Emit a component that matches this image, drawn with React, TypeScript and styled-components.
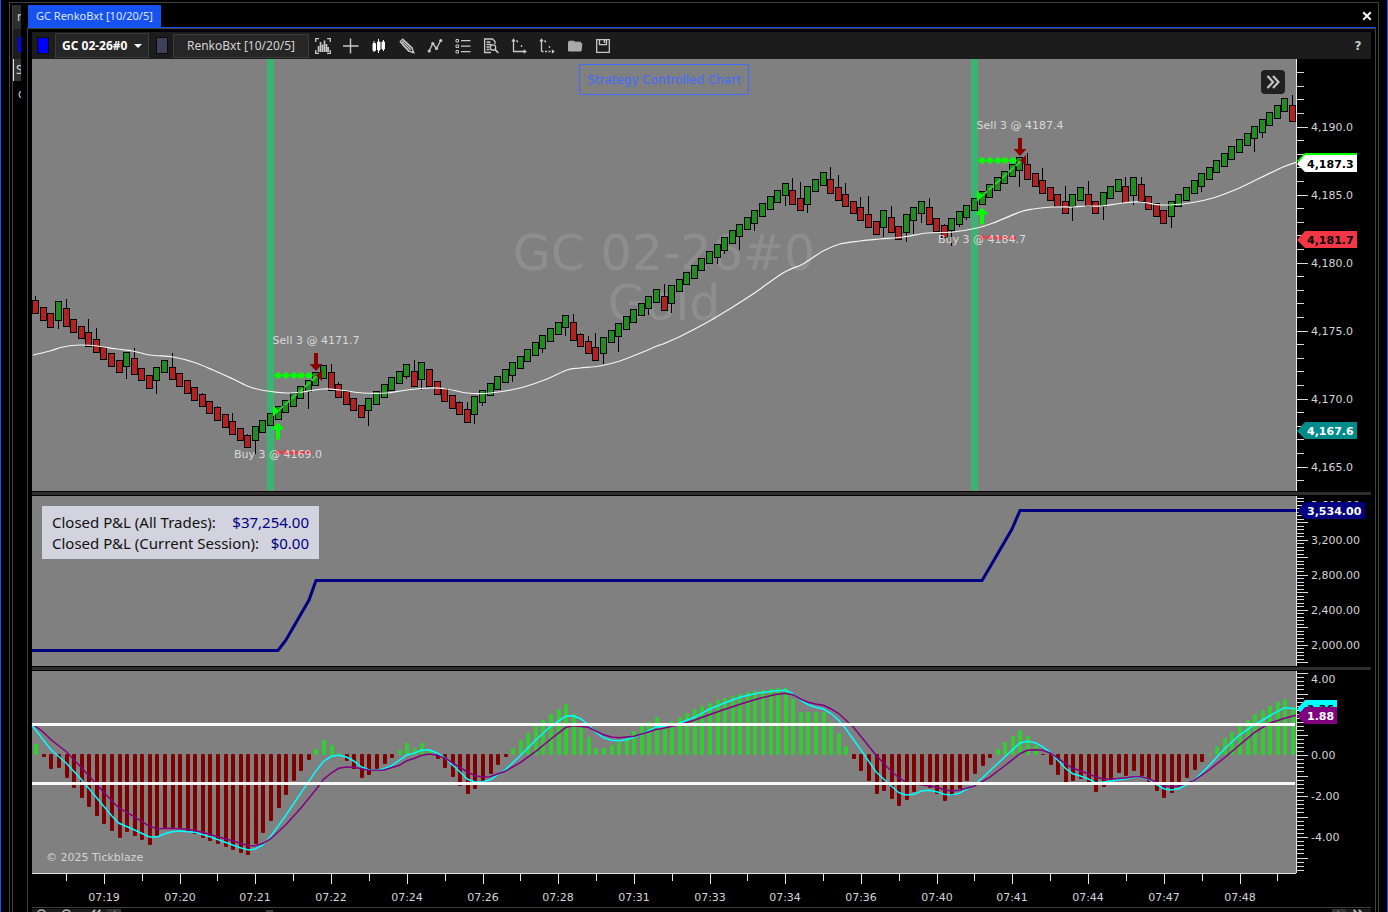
import React from 'react';
import styled, { createGlobalStyle } from 'styled-components';

const UI_FONT = '"Noto Sans", "Open Sans", sans-serif';
const CHART_FONT = '"DejaVu Sans", sans-serif';

const GlobalStyle = createGlobalStyle`
  * { box-sizing: border-box; }
  body { margin: 0; background: #000; color: #d4d4d4; font-family: ${UI_FONT}; }
  button, select { font: inherit; color: inherit; }
`;

/* ---------- window chrome ---------- */

const Desktop = styled.div`
  height: 100vh;
  overflow: hidden;
  padding: 2px 8px 0;
  border: solid #1552f0;
  border-width: 0 1px;
  background: #000;
`;

const OuterFrame = styled.div`
  display: flex;
  min-height: 100%;
  padding-right: 2px;
  border: 1px solid #404040;
  border-bottom: 0;
`;

const BackStrip = styled.aside`
  width: 9px;
  margin: 2px 6px 0 2px;
  border-left: 1px solid #404040;
  overflow: hidden;
  flex: none;
  font-size: 12px;
  line-height: 22px;
  color: #d4d4d4;
`;

const BackRow = styled.div<{ $bg: string; $h: number; $caret?: boolean }>`
  display: flex;
  align-items: center;
  justify-content: flex-end;
  height: ${(p) => p.$h}px;
  border-left: ${(p) => (p.$caret ? '1px solid #e0e0e0' : '0')};
  background: ${(p) => p.$bg};
  overflow: hidden;
`;

const BackClip = styled.span<{ $w: number }>`
  width: ${(p) => p.$w}px;
  overflow: hidden;
`;

const BackSwatch = styled.span`
  width: 3px;
  height: 15px;
  background: #0000ff;
`;

const Window = styled.main`
  flex: 1;
  min-width: 0;
  padding-top: 2px;
`;

const TabRow = styled.header`
  display: flex;
  justify-content: space-between;
  align-items: center;
  height: 23px;
  margin-left: 1px;
  border-bottom: 1px solid #1552f0;
`;

const Tab = styled.button`
  height: 22px;
  padding: 0 8px;
  border: 0;
  background: #1552f0;
  color: #dfe5f5;
  font-size: 11px;
  line-height: 22px;
  white-space: nowrap;
`;

const IconButton = styled.button`
  display: flex;
  align-items: center;
  justify-content: center;
  width: 28px;
  height: 24px;
  padding: 0;
  border: 0;
  background: transparent;
  color: #c8c8c8;
  flex: none;
`;

const CloseButton = styled(IconButton)`
  width: 18px;
  color: #fff;
`;

const InnerFrame = styled.div`
  padding: 3px 4px 0;
  border: 1px solid #404040;
  border-bottom: 0;
`;

const Toolbar = styled.nav`
  display: flex;
  align-items: center;
  height: 27px;
  padding-left: 5px;
  background: #1c1c1c;
`;

const Swatch = styled.button<{ $color: string }>`
  width: 12px;
  height: 17px;
  padding: 0;
  border: 1px solid #0a0a0a;
  background: ${(p) => p.$color};
  flex: none;
`;

const SelectBox = styled.label`
  display: flex;
  align-items: center;
  position: relative;
  width: 94px;
  height: 25px;
  margin: 0 7px 0 6px;
  border: 1px solid #3c3c3c;
  background: #262626;
  svg { position: absolute; right: 6px; pointer-events: none; }
`;

const InstrumentSelect = styled.select`
  width: 100%;
  height: 23px;
  padding: 0 16px 0 6px;
  appearance: none;
  border: 0;
  background: transparent;
  color: #fff;
  font-size: 12px;
  font-weight: 700;
`;

const PeriodButton = styled.button`
  width: 136px;
  height: 24px;
  margin: 0 0 0 5px;
  padding: 0;
  border: 1px solid #3c3c3c;
  background: #262626;
  font-size: 12px;
  white-space: nowrap;
`;

const HelpButton = styled(IconButton)`
  width: 26px;
  margin-left: auto;
  font: 700 12px ${CHART_FONT};
`;

/* ---------- chart panes ---------- */

const Pane = styled.section<{ $h: number }>`
  display: grid;
  grid-template-columns: minmax(0, 1fr) 75px;
  height: ${(p) => p.$h}px;
`;

const Plot = styled.div`
  position: relative;
  background: #808080;
`;

const PlotSvg = styled.svg`
  display: block;
  width: 100%;
  height: 100%;
  font: 11px ${CHART_FONT};
`;

const AxisSvg = styled.svg`
  display: block;
  font: 11px ${CHART_FONT};
  fill: #d4d4d4;
`;

const Divider = styled.hr`
  height: 5px;
  margin: 0;
  border: solid #000;
  border-width: 1px 0;
  background: #2e2e2e;
`;

const StrategyBadge = styled.button`
  position: absolute;
  top: 5px;
  left: 50%;
  width: 170px;
  height: 31px;
  margin-left: -85px;
  padding: 0;
  border: 1px solid #3f6cff;
  border-radius: 2px;
  background: transparent;
  color: #3f6cff;
  font: 12px ${CHART_FONT};
  white-space: nowrap;
`;

const CollapseButton = styled.button`
  display: flex;
  align-items: center;
  justify-content: center;
  position: absolute;
  top: 11px;
  right: 11px;
  width: 24px;
  height: 24px;
  padding: 0;
  border: 0;
  border-radius: 4px;
  background: #202020;
  color: #c4c4c4;
`;

const PnlBox = styled.dl`
  position: absolute;
  top: 10px;
  left: 10px;
  width: 277px;
  margin: 0;
  padding: 6px 10px 5px;
  background: #d2d3de;
  color: #111;
  font-size: 15px;
  line-height: 21px;
`;

const PnlRow = styled.div`
  display: flex;
  justify-content: space-between;
  white-space: nowrap;
  dt, dd { margin: 0; }
  dd { color: #000080; }
`;

const Copyright = styled.small`
  position: absolute;
  left: 14px;
  bottom: 8px;
  color: #d4d4d4;
  font: 11px/14px ${CHART_FONT};
`;

const TimeAxis = styled.div`
  display: grid;
  grid-template-columns: minmax(0, 1fr) 75px;
  height: 34px;
`;

const BottomBar = styled.footer`
  display: flex;
  height: 24px;
  padding-top: 1px;
  border-top: 1px solid #3c3c3c;
`;

const BottomTools = styled.div`
  display: flex;
  background: #1c1c1c;
`;

const BottomButton = styled.button<{ $w: number; $light?: boolean }>`
  display: flex;
  align-items: flex-start;
  justify-content: center;
  width: ${(p) => p.$w}px;
  height: 22px;
  padding: 0;
  border: 0;
  background: ${(p) => (p.$light ? '#333' : 'transparent')};
  color: #b4b4b4;
`;

const ScrollTrack = styled.div`
  flex: 1;
  padding: 1px 0 0 145px;
`;

const ScrollThumb = styled.div`
  width: 7px;
  height: 16px;
  background: #3c3c3c;
`;

/* ---------- data ---------- */

const BAR_STEP = 7.57;
const barX = (i: number) => Math.round(3.3 + i * BAR_STEP);

/* [direction, body top, body bottom, wick top?, wick bottom?] */
type Candle = [number, number, number, number?, number?];
const D = -1;
const U = 1;
const candles: Candle[] = [
  [D, 300, 314, 296], [D, 307, 321], [D, 313, 328], [U, 301, 321, 0, 329], [D, 308, 327, 299],
  [D, 319, 333], [D, 326, 339], [D, 332, 347, 319], [D, 339, 353, 328], [D, 347, 360],
  [D, 353, 367], [D, 360, 373], [U, 352, 367, 0, 379], [D, 358, 375, 348], [D, 368, 381],
  [D, 375, 389], [U, 367, 381, 0, 394], [U, 360, 373], [D, 367, 380, 353], [D, 373, 387],
  [D, 380, 394], [D, 387, 401], [D, 394, 407, 393], [D, 401, 414], [D, 407, 421, 406],
  [D, 414, 428], [D, 421, 435, 413], [D, 428, 441], [D, 435, 448, 434], [U, 426, 441, 0, 454],
  [U, 420, 433], [U, 413, 426], [U, 406, 420], [U, 400, 413], [U, 393, 407],
  [U, 386, 399], [U, 380, 392, 0, 409], [U, 372, 386], [U, 365, 379], [D, 372, 391, 364],
  [D, 384, 398, 382], [D, 391, 405], [D, 398, 411], [D, 405, 418], [U, 398, 411, 0, 426],
  [U, 391, 405], [U, 384, 398], [U, 377, 391], [U, 371, 384], [U, 364, 377, 0, 379],
  [D, 371, 387, 360], [U, 362, 380, 0, 390], [D, 369, 387], [D, 381, 395], [D, 388, 402],
  [D, 395, 409], [D, 402, 415, 401], [D, 409, 423, 402], [U, 396, 415, 0, 424], [U, 390, 403, 0, 406],
  [U, 383, 396], [U, 376, 390], [U, 369, 383], [U, 362, 376, 0, 382], [U, 356, 369],
  [U, 349, 362], [U, 342, 356], [U, 335, 349, 0, 353], [U, 328, 342], [U, 322, 335],
  [U, 315, 328, 0, 336], [D, 322, 341, 314], [D, 334, 347, 333], [D, 341, 354, 336], [D, 347, 361, 333],
  [U, 337, 354, 0, 364], [U, 330, 343], [U, 323, 337, 0, 352], [U, 316, 330], [U, 309, 323],
  [U, 303, 316], [U, 296, 309, 0, 315], [U, 289, 303], [D, 296, 311, 284], [U, 285, 304, 0, 313],
  [U, 279, 292], [U, 272, 285], [U, 265, 279], [U, 258, 271], [U, 251, 264],
  [U, 244, 258, 0, 264], [U, 237, 251, 0, 254], [U, 230, 244], [U, 224, 237, 0, 250], [U, 217, 230],
  [U, 210, 224, 0, 231], [U, 203, 217], [U, 196, 210], [U, 190, 203], [U, 183, 196, 0, 206],
  [D, 190, 205, 178], [D, 198, 211, 182], [U, 186, 205, 0, 213], [U, 179, 192], [U, 172, 186],
  [D, 179, 194, 167], [D, 187, 201, 175], [D, 194, 207, 183], [D, 201, 214], [D, 207, 221, 197],
  [D, 214, 228, 196], [D, 221, 235], [U, 210, 228, 0, 237], [D, 217, 233, 206], [D, 226, 240],
  [U, 214, 233, 0, 242], [U, 207, 221, 0, 234], [U, 201, 214, 0, 223], [D, 207, 225, 198], [D, 218, 232],
  [D, 225, 238, 224], [U, 218, 231, 0, 246], [U, 211, 225, 0, 227], [U, 205, 218, 0, 220], [U, 198, 211],
  [U, 191, 205], [U, 184, 198], [U, 177, 191], [U, 171, 184], [U, 164, 177],
  [U, 157, 171, 0, 187], [D, 164, 180, 153], [D, 173, 187], [D, 180, 194, 168], [D, 187, 201],
  [D, 194, 207], [D, 201, 214, 186], [U, 194, 207, 0, 221], [U, 187, 201], [D, 194, 207, 181],
  [D, 201, 214], [U, 192, 207, 0, 220], [U, 186, 199], [U, 179, 192], [D, 186, 203, 177],
  [U, 177, 196, 0, 205], [D, 184, 202, 177], [D, 196, 210], [D, 203, 217], [D, 210, 224],
  [U, 201, 217, 0, 228], [U, 194, 207], [U, 187, 201], [U, 180, 194], [U, 173, 187, 0, 192],
  [U, 167, 180], [U, 160, 173], [U, 153, 167], [U, 146, 160], [U, 139, 153],
  [U, 133, 146], [U, 126, 139, 0, 152], [U, 119, 133, 0, 138], [U, 112, 126], [U, 105, 119],
  [U, 98, 112], [D, 105, 122, 95],
];

const movingAverage =
  '33,355 50,351 63,347 80,345 97,346 117,349 133,351 150,355 173,357 193,362 213,370 233,379 250,387 267,391 287,393 303,392 323,389 340,390 363,393 387,393 407,390 430,388 447,389 467,393 490,393 520,388 547,379 567,370 580,368 600,366 620,361 643,352 657,346 663,344 683,335 713,319 750,296 783,273 803,264 823,251 840,244 860,241 880,239 903,237 927,233 953,232 977,228 993,223 1020,212 1033,209 1053,207 1073,207 1087,206 1103,206 1123,203 1140,202 1163,205 1190,203 1213,198 1237,189 1260,178 1283,167 1297,162';

/* Smooth curve through the given points (Catmull-Rom turned into cubic segments). */
const smoothPath = (points: string) => {
  const p = points.split(' ').map((s) => s.split(',').map(Number));
  let d = `M${p[0][0]} ${p[0][1]}`;
  for (let i = 0; i < p.length - 1; i++) {
    const a = p[Math.max(i - 1, 0)];
    const b = p[i];
    const c = p[i + 1];
    const e = p[Math.min(i + 2, p.length - 1)];
    d += `C${b[0] + (c[0] - a[0]) / 6} ${b[1] + (c[1] - a[1]) / 6} ${c[0] - (e[0] - b[0]) / 6} ${c[1] - (e[1] - b[1]) / 6} ${c[0]} ${c[1]}`;
  }
  return d;
};

const histogram = [
  744, 758, 770, 769, 779, 789, 799, 808, 817, 825, 832, 839, 833, 837, 841, 846, 837, 830, 829, 829,
  833, 835, 839, 842, 845, 848, 851, 854, 856, 845, 834, 822, 809, 796, 782, 772, 761, 749, 740, 745,
  753, 762, 770, 779, 776, 770, 765, 759, 750, 743, 748, 743, 749, 760, 769, 778, 787, 795, 790, 782,
  775, 766, 758, 748, 740, 733, 726, 720, 714, 709, 704, 714, 725, 737, 748, 748, 745, 742, 737, 731,
  726, 722, 717, 723, 721, 717, 713, 709, 706, 703, 700, 698, 696, 694, 692, 691, 690, 689, 688, 688,
  699, 712, 712, 712, 712, 722, 733, 746, 760, 772, 782, 795, 792, 800, 807, 801, 793, 785, 789, 795,
  802, 797, 790, 782, 775, 767, 759, 749, 742, 736, 730, 736, 745, 756, 766, 776, 786, 782, 780, 786,
  793, 788, 781, 774, 777, 772, 777, 783, 792, 799, 794, 787, 779, 771, 763, 754, 746, 738, 732, 726,
  720, 714, 710, 706, 702, 699, 707,
];

/* Oscillator lines: x,y samples for the first and the second half of the session. */
type Halves = [string, string];
const fastLine: Halves = [
  '10,136 36,178 57,210 94,250 130,298 167,352 205,407 223,430 260,449 298,471 316,471 335,461 353,455 372,453 409,457 446,470 483,487 520,503 541,510 557,507 576,494 594,470 631,407 669,338 706,272 724,244 743,229 761,226 780,231 798,243 817,261 835,269 854,270 872,266 891,257 928,225 947,219 965,210 984,210 1002,219 1021,233 1058,275 1077,298 1095,306 1114,305 1132,299 1169,270 1206,227 1244,180 1281,138 1318,108 1336,107 1355,117 1373,135 1392,157 1410,173 1429,181 1448,182 1466,179 1503,163 1540,140',
  '0,141 47,130 84,112 121,88 159,68 200,50 240,39 280,33 307,31 326,42 344,60 363,74 381,82 400,87 418,100 437,120 455,146 492,209 529,275 566,317 585,338 603,345 622,343 641,333 659,331 678,335 696,343 715,345 733,340 770,315 789,295 826,252 863,210 882,189 900,184 919,188 937,200 956,217 974,240 993,265 1011,281 1030,288 1048,296 1067,308 1104,304 1123,299 1141,297 1160,292 1178,291 1197,298 1215,312 1234,326 1252,330 1271,326 1308,302 1345,257 1382,208 1419,166 1456,135 1493,108 1530,83 1558,86',
];
const slowLine: Halves = [
  '10,132 36,155 57,180 94,215 130,262 167,312 205,362 223,384 260,410 298,439 316,446 353,445 390,448 428,457 465,470 502,483 541,497 557,497 576,490 594,477 631,435 669,383 706,328 724,298 743,279 761,265 780,261 798,262 835,271 872,270 910,256 928,242 947,235 965,226 984,222 1002,226 1021,234 1058,262 1077,276 1095,287 1114,291 1132,290 1169,274 1206,248 1244,214 1281,177 1318,142 1336,137 1373,142 1392,154 1410,164 1429,171 1448,173 1485,169 1522,155 1540,148',
  '0,147 47,134 84,121 121,104 159,88 200,71 240,56 280,44 307,40 326,44 344,57 363,67 381,72 400,76 418,86 437,100 455,120 474,142 529,225 566,273 585,293 603,307 641,315 678,322 696,329 715,333 733,331 770,318 807,292 844,258 882,221 900,211 919,209 937,211 956,219 993,250 1011,265 1030,272 1067,290 1085,297 1104,297 1141,294 1160,290 1178,290 1197,296 1215,306 1234,317 1252,320 1271,319 1308,302 1345,270 1382,234 1419,196 1456,158 1493,130 1530,115 1558,106',
];
const toPoints = (halves: Halves) =>
  halves
    .map((half, h) =>
      half
        .split(' ')
        .map((p) => {
          const [x, y] = p.split(',').map(Number);
          return `${((h ? 628 : -4) + x / 2.45).toFixed(1)},${(9 + y / 3).toFixed(1)}`;
        })
        .join(' '),
    )
    .join(' ');

const times = ['07:19', '07:20', '07:21', '07:22', '07:24', '07:26', '07:28', '07:31', '07:33', '07:34', '07:36', '07:40', '07:41', '07:44', '07:47', '07:48'];

/* ---------- toolbar icons ---------- */

const Glyph = ({ children, size = 16 }: { children: React.ReactNode; size?: number }) => (
  <svg width={size} height={size} viewBox="0 0 16 16" fill="none" stroke="currentColor" strokeWidth="1.3" aria-hidden="true">
    {children}
  </svg>
);

const tools: { name: string; icon: React.ReactNode }[] = [
  {
    name: 'Chart style',
    icon: (
      <>
        <path d="M.7 4V.7H4M12 .7h3.3V4M.7 12v3.3H4M12 15.3h3.3V12" />
        <path d="M3.5 14V8M5.5 14V4M7.5 14V6.500M9.500 14V2.500M11.500 14V6M13.200 14V9" strokeWidth="1.600" />
      </>
    ),
  },
  { name: 'Crosshair', icon: <path d="M7.500 .5v15M0 8h15.500" strokeWidth="1.400" /> },
  {
    name: 'Candles',
    icon: (
      <g stroke="#fff" fill="#fff">
        <path d="M3 3v11M7.500 1v14M12.500 2v11" strokeWidth="1" />
        <path d="M2 5.500h2.500v7H2zM6.500 4H9v8H6.500zM11 4h2.500v7H11z" strokeWidth="1" />
      </g>
    ),
  },
  {
    name: 'Draw',
    icon: (
      <>
        <path d="M1.200 3.800 3.800 1.200 13 9.800l1.800 5-5-1.600z" />
        <path d="M2.600 5.200 5.200 2.600M4.500 4.500l7.500 7.500M6.200 3.600l7 6.700M3.300 6.200l6.800 6.800M13 13.200l1.600 1.500" />
      </>
    ),
  },
  {
    name: 'Indicators',
    icon: (
      <>
        <path d="M2 13.200 5.800 5.500 9.500 10.500 14 2" />
        <g fill="currentColor" stroke="none">
          <circle cx="2.200" cy="13" r="1.600" /><circle cx="5.800" cy="5.500" r="1.600" />
          <circle cx="9.500" cy="10.500" r="1.600" /><circle cx="13.800" cy="2.500" r="1.600" />
        </g>
      </>
    ),
  },
  {
    name: 'Objects',
    icon: (
      <>
        <path d="M1 1.500h2.500V4H1zM1 7h2.500v2.500H1zM1 12.500h2.500V15H1z" strokeWidth="1" />
        <path d="M6 2.700h9.500M6 8.200h9.500M6 13.700h9.500" />
      </>
    ),
  },
  {
    name: 'Data box',
    icon: (
      <>
        <path d="M12 6V3.500L9.500 1H1.600v13.500H8M3.500 4h4M3.500 6.500h5M3.500 9h3M3.500 11.500h3" />
        <circle cx="10" cy="9.500" r="2.700" /><path d="m12 11.500 3.300 3.300" strokeWidth="1.700" />
      </>
    ),
  },
  {
    name: 'Lock scale',
    icon: (
      <>
        <path d="M2.500 2v11.500H14M1 3.300 2.500 1.300 4 3.300M12.800 12l2 1.500-2 1.500" />
        <path d="M5 3h1.800M10.500 7v2M6.500 2.500v2" strokeWidth="1.200" />
      </>
    ),
  },
  {
    name: 'Auto scale',
    icon: (
      <>
        <path d="M2.500 2v11.500M1 3.300 2.500 1.300 4 3.300M12.800 12l2 1.500-2 1.500" />
        <path d="M2.500 13.500H14" strokeDasharray="2 1.500" />
        <path d="M5 3h1.800M10.500 8v2M6.500 2.500v2" strokeWidth="1.200" />
      </>
    ),
  },
  {
    name: 'Open',
    icon: <path d="M1.500 13V4.200q0-1 1-1H7l1 1h5.300q.8 0 .8 1v.6h.8L14 13z" fill="#aaa" stroke="#aaa" strokeWidth="1" />,
  },
  {
    name: 'Save',
    icon: (
      <>
        <path d="M1.700 1.700h12.600v12.600H1.700z" />
        <path d="M4.500 1.700v5h7v-5" /><path d="M9.500 2v3" strokeWidth="1.600" />
      </>
    ),
  },
];

/* ---------- chart parts ---------- */

const TradeMark = ({ x, y, buy, sell }: { x: number; y: number; buy: string; sell: string }) => (
  <g transform={`translate(${x} ${y})`}>
    <path d="M0-41 39-76" stroke="#32cd32" strokeWidth="2" strokeDasharray="7 2" />
    <path d="M0-76.500H34" stroke="#00ff00" strokeDasharray="2 1" />
    {[0, 8, 16, 23, 31].map((d) => (
      <path key={d} d={`M${d - 4}-76.500l2.500-3h3l2.500 3-2.500 3h-3z`} fill="#00ff00" />
    ))}
    <path d="M-5-46.500v11l6-5.500z" fill="#00ff00" />
    <path d="M44-82v11l-6-5.500z" fill="#8b0000" />
    <path d="M0-29.500l6.500 7H2v10h-4v-10h-4.500z" fill="#00ff00" />
    <path d="M38-81l6.500-7H40v-11h-4v11h-4.500z" fill="#8b0000" />
    <path d="M0 .500H34" stroke="#f23645" strokeWidth="2" strokeDasharray="2 1" />
    {[0, 8, 16, 23, 31].map((d) => (
      <circle key={d} cx={d} cy=".5" r="2.500" fill="#f23645" />
    ))}
    <text x="38" y="-108" textAnchor="middle" fill="#d9d9d9">{sell}</text>
    <text x="0" y="6" textAnchor="middle" fill="#d9d9d9">{buy}</text>
  </g>
);

const Tag = ({ y, w, fill, color, children }: { y: number; w: number; fill: string; color: string; children: string }) => (
  <g>
    <path d={`M1 ${y}l8-9H${w}v17H9z`} fill={fill} />
    <text x="11" y={y + 4} fill={color} fontWeight="700">{children}</text>
  </g>
);

const ticks = (zero: number, step: number, every: number, height: number) => {
  const out: React.ReactNode[] = [];
  for (let k = Math.ceil(-zero / step); zero + k * step < height; k++) {
    const y = Math.round(zero + k * step) + 0.5;
    out.push(<path key={k} d={`M0 ${y}h${k % every === 0 ? 12 : 8}`} stroke="#d9d9d9" />);
  }
  return out;
};

const AxisLine = ({ h }: { h: number }) => <path d={`M.5 0V${h}`} stroke="#e6e6e6" />;

export default function App() {
  return (
    <>
      <GlobalStyle />
      <Desktop>
        <OuterFrame>
          <BackStrip aria-hidden="true">
            <BackRow $bg="#2e2e2e" $h={24}><BackClip $w={4}>n</BackClip></BackRow>
            <BackRow $bg="#1c1c1c" $h={30}><BackSwatch /></BackRow>
            <BackRow $bg="#333333" $h={22} $caret><BackClip $w={5}>S</BackClip></BackRow>
            <BackRow $bg="#000000" $h={26}><BackClip $w={3}>c</BackClip></BackRow>
          </BackStrip>
          <Window>
            <TabRow>
              <Tab>GC RenkoBxt [10/20/5]</Tab>
              <CloseButton aria-label="Close">
                <Glyph size={12}><path d="M3 3l10 10M13 3 3 13" strokeWidth="2.600" /></Glyph>
              </CloseButton>
            </TabRow>
            <InnerFrame>
              <Toolbar>
                <Swatch $color="#0000ff" aria-label="Instrument link" />
                <SelectBox>
                  <InstrumentSelect aria-label="Instrument" defaultValue="gc">
                    <option value="gc">GC 02-26#0</option>
                  </InstrumentSelect>
                  <svg width="8" height="4" viewBox="0 0 8 4" fill="#fff"><path d="M0 0h8L4 4z" /></svg>
                </SelectBox>
                <Swatch $color="#3e415c" aria-label="Interval link" />
                <PeriodButton>RenkoBxt [10/20/5]</PeriodButton>
                {tools.map((t) => (
                  <IconButton key={t.name} aria-label={t.name}><Glyph>{t.icon}</Glyph></IconButton>
                ))}
                <HelpButton aria-label="Help">?</HelpButton>
              </Toolbar>

              <Pane $h={432}>
                <Plot>
                  <PlotSvg viewBox="0 0 1264 432" preserveAspectRatio="xMaxYMid meet">
                    <g fill="#8e8e8e" fontSize="49" textAnchor="middle">
                      <text x="632" y="211">GC 02-26#0</text>
                      <text x="632" y="261">Gold</text>
                    </g>
                    <path d="M235 0h7v432h-7zM939 0h7v432h-7z" fill="#3cb371" />
                    <g transform="translate(0 -59)">
                      {candles.map(([dir, top, bottom, wt, wb], i) => {
                        const x = barX(i);
                        return (
                          <g key={i} stroke="#000">
                            {(wt || wb) ? <path d={`M${x + 0.5} ${wt || top}V${wb || bottom}`} /> : null}
                            <rect x={x - 2.5} y={top + 0.5} width="6" height={bottom - top - 1} fill={dir > 0 ? '#228b22' : '#b22222'} />
                          </g>
                        );
                      })}
                    </g>
                    <g transform="translate(-32 -59)">
                      <path d={smoothPath(movingAverage)} fill="none" stroke="#f5f5f5" strokeWidth="1.200" />
                    </g>
                    <TradeMark x={246} y={393} buy="Buy 3 @ 4169.0" sell="Sell 3 @ 4171.7" />
                    <TradeMark x={950} y={178} buy="Buy 3 @ 4184.7" sell="Sell 3 @ 4187.4" />
                  </PlotSvg>
                  <StrategyBadge>Strategy Controlled Chart</StrategyBadge>
                  <CollapseButton aria-label="Collapse panel">
                    <Glyph><path d="m2.500 2 5.500 6-5.500 6M8 2l5.500 6L8 14" strokeWidth="2.200" /></Glyph>
                  </CollapseButton>
                </Plot>
                <AxisSvg width="75" height="432">
                  <AxisLine h={432} />
                  {ticks(67.500, 13.6, 5, 424)}
                  {['4,190.0', '4,185.0', '4,180.0', '4,175.0', '4,170.0', '4,165.0'].map((t, i) => (
                    <text key={t} x="15" y={72 + i * 68}>{t}</text>
                  ))}
                  <path d="M1 102l8-8h52v17H9z" fill="#00ff00" />
                  <Tag y={105} w={61} fill="#fff" color="#000">4,187.3</Tag>
                  <Tag y={181} w={61} fill="#f23645" color="#000">4,181.7</Tag>
                  <Tag y={372} w={61} fill="#008b8b" color="#fff">4,167.6</Tag>
                </AxisSvg>
              </Pane>
              <Divider />
              <Pane $h={170}>
                <Plot>
                  <PlotSvg viewBox="0 0 1264 170" preserveAspectRatio="xMaxYMid meet">
                    <polyline
                      points="0,154.500 246,154.500 254,144 277,104 284,84.500 950,84.500 958,71 980,33 988,14.500 1264,14.500"
                      fill="none"
                      stroke="#000080"
                      strokeWidth="3"
                    />
                  </PlotSvg>
                  <PnlBox>
                    <PnlRow><dt>Closed P&amp;L (All Trades):</dt><dd>$37,254.00</dd></PnlRow>
                    <PnlRow><dt>Closed P&amp;L (Current Session):</dt><dd>$0.00</dd></PnlRow>
                  </PnlBox>
                </Plot>
                <AxisSvg width="75" height="170">
                  <AxisLine h={170} />
                  {ticks(8.500, 3.5, 5, 170)}
                  {['3,600.00', '3,200.00', '2,800.00', '2,400.00', '2,000.00'].map((t, i) => (
                    <text key={t} x="15" y={13 + i * 35}>{t}</text>
                  ))}
                  <Tag y={15} w={69} fill="#000080" color="#fff">3,534.00</Tag>
                </AxisSvg>
              </Pane>
              <Divider />
              <Pane $h={202}>
                <Plot>
                  <PlotSvg viewBox="0 0 1264 202" preserveAspectRatio="xMaxYMid meet">
                    {histogram.map((v, i) => {
                      const y = v - 671;
                      return (
                        <rect
                          key={i}
                          x={barX(i) - 1}
                          y={Math.min(y, 83)}
                          width="4"
                          height={Math.max(Math.abs(y - 84), 1)}
                          rx="1"
                          fill={y < 84 ? '#32cd32' : '#800000'}
                        />
                      );
                    })}
                    <polyline points={toPoints(fastLine)} fill="none" stroke="#00ffff" strokeWidth="1.500" />
                    <polyline points={toPoints(slowLine)} fill="none" stroke="#800080" strokeWidth="1.500" />
                    <path d="M0 53.500h1263M0 112.500h1263" stroke="#f8f8f8" strokeWidth="3" />
                  </PlotSvg>
                  <Copyright>© 2025 Tickblaze</Copyright>
                </Plot>
                <AxisSvg width="75" height="202">
                  <AxisLine h={202} />
                  {ticks(84, 4.1, 5, 202)}
                  <text x="15" y="12">4.00</text>
                  <text x="15" y="88">0.00</text>
                  <text x="15" y="129">-2.00</text>
                  <text x="15" y="170">-4.00</text>
                  <Tag y={38} w={41} fill="#00ffff" color="#000">2.36</Tag>
                  <Tag y={45} w={41} fill="#800080" color="#fff">1.88</Tag>
                </AxisSvg>
              </Pane>
              <TimeAxis>
                <PlotSvg viewBox="0 0 1264 34" preserveAspectRatio="xMaxYMin meet">
                  <path d="M0 .5h1264" stroke="#e6e6e6" />
                  {times.map((t, k) => {
                    const x = Math.round(72 + k * 75.7);
                    return (
                      <g key={t} stroke="#e6e6e6">
                        <path d={`M${x - 37.5} 0v8M${x + 0.5} 0v11`} />
                        <text x={x} y="28" textAnchor="middle" fill="#d4d4d4" stroke="none">{t}</text>
                      </g>
                    );
                  })}
                  <path d="M1245.500 0v8" stroke="#e6e6e6" />
                </PlotSvg>
              </TimeAxis>
              <BottomBar>
                <BottomTools>
                  <BottomButton $w={22} aria-label="Zoom out"><Glyph size={12}><circle cx="6" cy="6.500" r="5.200" strokeWidth="2" /></Glyph></BottomButton>
                  <BottomButton $w={28} aria-label="Zoom in"><Glyph size={12}><circle cx="6" cy="6.500" r="5.200" strokeWidth="2" /><path d="M6 4v5M4 6.500h4" /></Glyph></BottomButton>
                  <BottomButton $w={25} aria-label="Oldest"><Glyph size={14}><path d="M8 1 3 7l5 6M14 1 9 7l5 6" strokeWidth="2.400" /></Glyph></BottomButton>
                  <BottomButton $w={14} $light aria-label="Scroll left"><Glyph size={10}><path d="M10 3 5 8l5 5" /></Glyph></BottomButton>
                </BottomTools>
                <ScrollTrack><ScrollThumb /></ScrollTrack>
                <BottomTools>
                  <BottomButton $w={14} $light aria-label="Scroll right"><Glyph size={10}><path d="m6 3 5 5-5 5" /></Glyph></BottomButton>
                  <BottomButton $w={25} aria-label="Latest"><Glyph size={14}><path d="m2 1 5 6-5 6M8 1l5 6-5 6" strokeWidth="2.400" /></Glyph></BottomButton>
                </BottomTools>
              </BottomBar>
            </InnerFrame>
          </Window>
        </OuterFrame>
      </Desktop>
    </>
  );
}
